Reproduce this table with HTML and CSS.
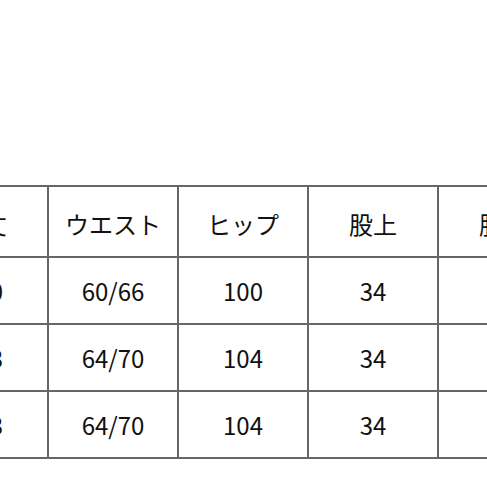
FILE: index.html
```html
<!DOCTYPE html>
<html lang="ja">
<head>
<meta charset="utf-8">
<link rel="stylesheet" href="styles.css">
</head>
<body>
<div class="page">
  <table class="size-table">
    <colgroup>
      <col class="col"><col class="col"><col class="col"><col class="col"><col class="col">
    </colgroup>
    <tr class="head">
      <td>着丈</td><td>ウエスト</td><td>ヒップ</td><td>股上</td><td>股下</td>
    </tr>
    <tr>
      <td>100</td><td>60/66</td><td>100</td><td>34</td><td>70</td>
    </tr>
    <tr>
      <td>103</td><td>64/70</td><td>104</td><td>34</td><td>70</td>
    </tr>
    <tr>
      <td>103</td><td>64/70</td><td>104</td><td>34</td><td>70</td>
    </tr>
  </table>
</div>
</body>
</html>
```

FILE: styles.css
```css
html, body {
  margin: 0;
  padding: 0;
  background: #ffffff;
  overflow: hidden;
}
.page {
  width: 487px;
  height: 487px;
  overflow: hidden;
  padding-top: 185px;
  box-sizing: border-box;
}
.size-table {
  margin-left: -83px;
  border-collapse: collapse;
  table-layout: fixed;
  width: 650px;
  font-family: "Noto Sans CJK JP", "Noto Sans", sans-serif;
  font-size: 24px;
  color: #111111;
}
.col {
  width: 130px;
}
.size-table td {
  border: 2px solid #666666;
  text-align: center;
  vertical-align: middle;
  padding: 0;
  height: 65px;
  line-height: 1;
}
.size-table tr.head td {
  height: 65px;
  padding-top: 4px;
}
```
